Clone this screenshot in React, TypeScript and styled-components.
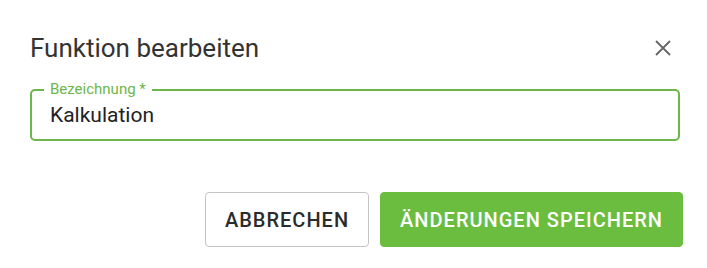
import styled, { createGlobalStyle } from "styled-components";

const GlobalStyle = createGlobalStyle`
  html, body {
    margin: 0;
    padding: 0;
    background: #ffffff;
  }
  body {
    font-family: Roboto, "Liberation Sans", Arial, sans-serif;
  }
`;

const GREEN = "#6abd3f";
const FIELD_GREEN = "#6cb64a";

const Dialog = styled.div`
  width: 707px;
  height: 268px;
  box-sizing: border-box;
  padding: 30px 24px 0 30px;
  display: flex;
  flex-direction: column;
`;

const Header = styled.div`
  display: flex;
  align-items: center;
  justify-content: space-between;
  height: 36px;
  padding-right: 10px;
`;

const Title = styled.h2`
  margin: 0;
  font-size: 26px;
  font-weight: 400;
  line-height: 36px;
  color: #333333;
`;

const CloseButton = styled.button`
  border: 0;
  background: none;
  padding: 0;
  width: 20px;
  height: 20px;
  display: flex;
  align-items: center;
  justify-content: center;
  color: #666666;
  cursor: pointer;
`;

const Field = styled.div`
  position: relative;
  margin: 23px 3px 0 0;
  padding: 0 18px;
  height: 52px;
  box-sizing: border-box;
  border: 2.5px solid ${FIELD_GREEN};
  border-radius: 5px;
  display: flex;
  align-items: center;
`;

const Label = styled.label`
  position: absolute;
  top: -11px;
  left: 12px;
  padding: 0 6px;
  background: #ffffff;
  font-size: 15px;
  line-height: 18px;
  color: ${FIELD_GREEN};
`;

const Value = styled.div`
  font-size: 21px;
  color: #222222;
`;

const Actions = styled.div`
  display: flex;
  justify-content: flex-end;
  gap: 11px;
  margin-top: 51px;
`;

const Button = styled.button<{ $primary?: boolean }>`
  height: 55px;
  box-sizing: border-box;
  padding: 0 19px;
  border-radius: 4px;
  font-family: Roboto, "Liberation Sans", Arial, sans-serif;
  font-size: 20px;
  font-weight: 500;
  letter-spacing: 1px;
  text-transform: uppercase;
  cursor: pointer;
  border: 1px solid ${(p) => (p.$primary ? GREEN : "#c4c4c4")};
  background: ${(p) => (p.$primary ? GREEN : "#ffffff")};
  color: ${(p) => (p.$primary ? "#ffffff" : "#2b2b2b")};
`;

export default function App() {
  return (
    <>
      <GlobalStyle />
      <Dialog>
        <Header>
          <Title>Funktion bearbeiten</Title>
          <CloseButton aria-label="Schließen">
            <svg width="16" height="16" viewBox="0 0 16 16">
              <path d="M1 1 L15 15 M15 1 L1 15" stroke="currentColor" strokeWidth="1.8" fill="none" />
            </svg>
          </CloseButton>
        </Header>
        <Field>
          <Label>Bezeichnung *</Label>
          <Value>Kalkulation</Value>
        </Field>
        <Actions>
          <Button>Abbrechen</Button>
          <Button $primary>Änderungen speichern</Button>
        </Actions>
      </Dialog>
    </>
  );
}
